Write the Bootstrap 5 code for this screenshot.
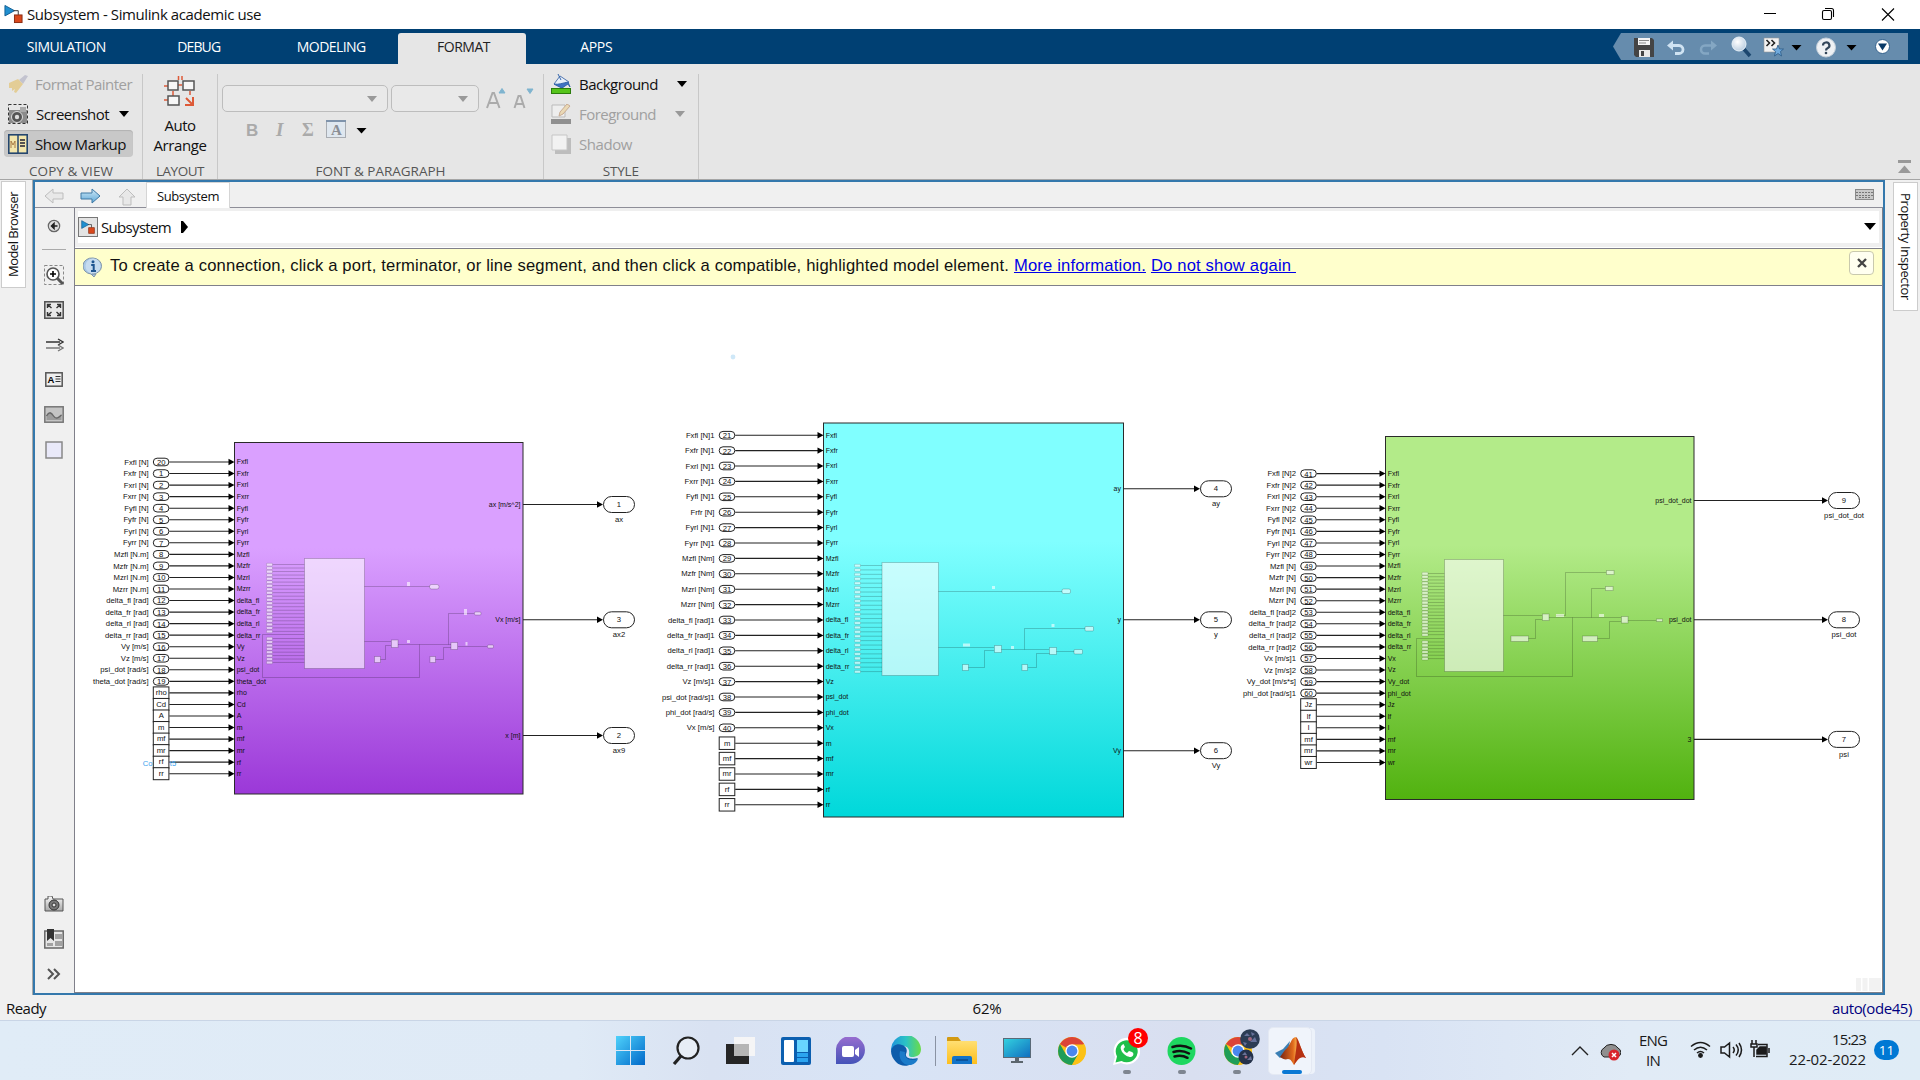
<!DOCTYPE html>
<html lang="en">
<head>
<meta charset="utf-8">
<title>Subsystem - Simulink academic use</title>
<link href="https://cdn.jsdelivr.net/npm/bootstrap@5.3.0/dist/css/bootstrap.min.css" rel="stylesheet">
<style>
html,body{height:100%;overflow:hidden}
body{width:1920px;height:1080px;font-family:"Open Sans","Noto Sans",sans-serif;font-size:15px;line-height:20px;color:#111;background:#f0f0f0}
svg{display:block;flex:none}
[data-w],[data-h]{display:inline-block;white-space:nowrap}
.titlebar{height:29px;background:#fff;padding:0 10px 1px 4px}
.tabstrip{height:35px;background:#004073;color:#fff;font-size:14px}
.rtab{width:132.5px;height:31px;line-height:28px;text-align:center}
.rtab.on{width:128px;margin:0 4px 0 .5px;padding-left:3px;background:#e6e6e6;color:#222;border-radius:3px 3px 0 0}
.quick{width:295px;height:27px;background:#668cad;clip-path:polygon(8px 0,100% 0,100% 100%,8px 100%,0 50%);margin:4px 12px 0 0}
.ribbon{height:116px;background:#e6e6e6;border-bottom:1px solid #a5a5a5;font-size:15px}
.rgroup{margin-top:10px;height:105px;border-right:1px solid #c8c8c8}
.ritems{height:89px;margin-top:-4px}
.rcap{color:#555;font-size:13.5px;line-height:16px;height:16px;text-align:center}
.dim{color:#a0a0a0}
.ritem{height:27px;padding-left:4px;border-radius:4px}
.ritem.on{background:#c8c8c8;box-shadow:inset 0 1px 1px #b2b2b2}
.combo{height:27px;border:1px solid #bdbdbd;border-radius:5px;background:#e9e9e9}
.tri{width:0;height:0;border:5px solid transparent;border-top:6px solid #000;border-bottom:0;flex:none}
.tri.g{border-top-color:#999}
.work{height:815px}
.side{width:33px;border-right:1px solid #a9a9a9}
.sidetab{background:#fff;border:1px solid #ccc;font-size:13px;writing-mode:vertical-rl;line-height:23px;text-align:center}
.frame{width:1852px;border:2px solid #3478ac}
.docbar{height:26px;border-bottom:1px solid #8e8e98}
.doctab{width:84px;height:26px;background:#fff;border:1px solid #d5d5d5;border-bottom:0;font-size:13px;line-height:26px;text-align:center;margin-left:2px}
.palette{width:39px;padding:0 1px 2px 0}
.palette>div{height:35px}
.stage{width:1809px;border-left:1px solid #80808a;border-right:1px solid #80808a;border-bottom:1px solid #80808a;background:#fff}
.crumb{height:39px;border:3px solid #efefef;border-bottom-width:4px;background:#fff}
.note{height:38px;margin:1px 0;background:#ffffcc;border-top:1px solid #80808a;border-bottom:1px solid #80808a;font-family:"Liberation Sans",Arial,sans-serif;font-size:16.6px}
.note a{color:#0000e8;text-decoration:underline}
.xbtn{width:25px;height:24px;border:1px solid #c9c9ad;border-radius:4px;background:#fffff0;margin:2px 8px 0 0}
.status{height:25px;background:#f0f0f0}
.taskbar{height:60px;background:linear-gradient(90deg,#e0ecf7 0,#dfeaf6 30%,#d9e2f2 37%,#d8e4f6 46%,#d9dff0 62%,#d9e3f4 72%,#e1ebf6 85%,#dfecf6 100%);border-top:1px solid #c9d5e6;color:#1a1a1a}
.slot{width:55px;height:59px;position:relative}
.run::after{content:"";position:absolute;left:24px;top:49px;width:8px;height:4px;border-radius:2px;background:#7e8590}
.wabadge{position:absolute;left:29px;top:7px;width:20px;height:20px;border-radius:50%;background:#f00;color:#fff;font-size:16px;line-height:20px;text-align:center}
.tile{width:44px;height:48px;background:#f0f4fb;border-radius:5px;border:1px solid #e4e9f3;box-shadow:4px 0 0 -1px #edf2fa;margin-left:4px;position:relative}
.tile::after{content:"";position:absolute;left:13px;bottom:0;width:20px;height:4px;border-radius:2px;background:#0a78d4}
.cnt{width:25px;height:20px;border-radius:10px;background:#0078d4;color:#fff;font-size:13.5px;line-height:20px;text-align:center}
#diagram text{font-family:"Liberation Sans",Arial,sans-serif}
</style>
<script src="https://cdn.jsdelivr.net/npm/bootstrap@5.3.0/dist/js/bootstrap.bundle.min.js"></script>
</head>
<body class="d-flex flex-column">
<svg width="0" height="0" style="position:absolute">
 <defs>
  <linearGradient id="gBlue" x1="0" y1="0" x2="0" y2="1"><stop offset="0" stop-color="#cfe9f8"/><stop offset="1" stop-color="#5ea7d6"/></linearGradient>
  <linearGradient id="gGrey" x1="0" y1="0" x2="0" y2="1"><stop offset="0" stop-color="#fafafa"/><stop offset="1" stop-color="#a8a8a8"/></linearGradient>
  <linearGradient id="gWin" x1="0" y1="0" x2="1" y2="1"><stop offset="0" stop-color="#4fd2fb"/><stop offset="1" stop-color="#0068c9"/></linearGradient>
  <linearGradient id="gChat" x1="0" y1="0" x2="0" y2="1"><stop offset="0" stop-color="#9a6ed0"/><stop offset="1" stop-color="#4453b8"/></linearGradient>
  <linearGradient id="gEdge" x1="0" y1="0" x2="1" y2="0"><stop offset="0" stop-color="#1e93dc"/><stop offset=".5" stop-color="#2bc3c5"/><stop offset="1" stop-color="#6bdc48"/></linearGradient>
  <linearGradient id="gFold" x1="0" y1="0" x2="0" y2="1"><stop offset="0" stop-color="#ffdf73"/><stop offset="1" stop-color="#fdbe1c"/></linearGradient>
  <linearGradient id="gMon" x1="0" y1="0" x2="1" y2="1"><stop offset="0" stop-color="#34d3e0"/><stop offset="1" stop-color="#0f6cbf"/></linearGradient>
  <linearGradient id="gMat" x1="0" y1="0" x2="1" y2="0"><stop offset="0" stop-color="#7a2410"/><stop offset=".5" stop-color="#e06a1c"/><stop offset=".65" stop-color="#f9b04c"/><stop offset="1" stop-color="#a2220c"/></linearGradient>
  <radialGradient id="gLens" cx=".4" cy=".35" r=".7"><stop offset="0" stop-color="#fff"/><stop offset="1" stop-color="#b9cde0"/></radialGradient>
  <symbol id="sl" viewBox="0 0 20 20"><path d="M1 1v11l10-5.5z" fill="#1f8fd0" stroke="#145f92"/><path d="M10 6.5h5V11" fill="none" stroke="#333"/><rect x="11" y="11" width="8" height="8" fill="#d9481c" stroke="#8a2b10"/></symbol>
  <symbol id="chrome" viewBox="0 0 28 28"><circle cx="14" cy="14" r="14" fill="#fbc116"/><path d="M14 14L1.9 7A14 14 0 0 1 26.1 7z" fill="#dc4437"/><path d="M1.9 7A14 14 0 0 0 14 28l6-10.5H8z" fill="#1f9d57"/><path d="M14 28A14 14 0 0 0 26.1 7.5H14l6.2 10z" fill="#fbc116"/><circle cx="14" cy="14" r="6.7" fill="#fff"/><circle cx="14" cy="14" r="5.4" fill="#4a87ee"/></symbol>
 </defs>
</svg>

<header class="titlebar d-flex align-items-center">
 <svg width="19" height="20" class="me-1"><use href="#sl" width="19" height="20"/></svg>
 <span data-w="234">Subsystem - Simulink academic use</span>
 <svg class="ms-auto" width="150" height="28" fill="none" stroke="#000" stroke-width="1.1"><path d="M4 13.5h12M122 8.500l12 12M134 8.500l-12 12"/><rect x="62.500" y="10.500" width="9" height="9" rx="1.500"/><path d="M65 8.500h6.500a2 2 0 0 1 2 2V17"/></svg>
</header>

<nav class="tabstrip d-flex">
 <div class="d-flex align-items-end">
  <div class="rtab"><span data-w="79">SIMULATION</span></div><div class="rtab"><span data-w="43">DEBUG</span></div><div class="rtab"><span data-w="69">MODELING</span></div><div class="rtab on"><span data-w="53">FORMAT</span></div><div class="rtab"><span data-w="32">APPS</span></div>
 </div>
 <div class="quick ms-auto">
  <svg width="295" height="27">
   <path d="M21 5h18l2 2v17H23l-2-2z" fill="#444"/><path d="M25 5h12v7H25z" fill="#f4f4f4"/><path d="M26 7.500h10M26 10h7" stroke="#888"/><path d="M26 17h11v7H26z" fill="#e8e8e8"/><path d="M28 18h3v5h-3z" fill="#444"/>
   <path d="M56 12.500h10a4 4 0 0 1 0 8h-4" fill="none" stroke="#cfe3f2" stroke-width="2.800"/><path d="M54 12.500l6-5v10z" fill="#cfe3f2"/>
   <path d="M102 12.500H92a4 4 0 0 0 0 8h4" fill="none" stroke="#84a7c3" stroke-width="2.500"/><path d="M104 12.500l-6-5v10z" fill="#84a7c3"/>
   <path d="M130 15l7 8" stroke="#1c466e" stroke-width="3.500"/><circle cx="126" cy="11" r="7" fill="url(#gLens)" stroke="#e8f1f8"/>
   <path d="M151 5h15v14h-15z" fill="#f2f2f2" stroke="#999" stroke-width=".6"/><path d="M153.500 7l3 3-3 3M158.500 7l3 3-3 3" fill="none" stroke="#222" stroke-width="1.600"/><path d="M165 12l1.500 4h4l-3 2.500 1 4.500-3.500-2.500-3.500 2.500 1-4.500-3-2.500h4z" fill="#6fa9dc" stroke="#2c5a86" stroke-width=".8"/>
   <path d="M178.500 12h10l-5 5.500zM233.500 12h10l-5 5.500z" fill="#000"/>
   <circle cx="213" cy="14.500" r="9.500" fill="#eef1f4" stroke="#c5d0da"/><path d="M210 12.500a3.200 3 0 1 1 4.500 2.700c-1 .5-1.500 1-1.500 2.200" fill="none" stroke="#33465a" stroke-width="2.200"/><circle cx="213" cy="20" r="1.300" fill="#33465a"/>
   <circle cx="269.500" cy="13.500" r="7" fill="#fff" stroke="#33618c"/><path d="M265 10.500h9l-4.500 7z" fill="#0a3a68"/>
  </svg>
 </div>
</nav>

<section class="ribbon d-flex">
 <div class="rgroup d-flex flex-column" style="width:143px">
  <div class="ritems ps-1" style="padding-right:9px">
   <div class="ritem d-flex align-items-center dim"><svg width="20" height="20" class="me-2"><path d="M11 6l6-5 3 1-5 8z" fill="#c3c3cf"/><path d="M1 9l9-4 5 5-7 9-2-1 1-3-3 2 0-3-3 0z" fill="#e3cd96"/></svg><span data-w="97" style="margin-left:-1px">Format Painter</span></div>
   <div class="ritem d-flex align-items-center" style="margin-top:3px"><svg width="20" height="20" class="me-2"><rect x=".5" y=".5" width="19" height="19" fill="none" stroke="#333" stroke-dasharray="3 2"/><rect x="1" y="6" width="18" height="13" fill="#8b8b8b"/><rect x="12" y="3" width="6" height="5" fill="#aaa"/><circle cx="9" cy="13" r="5.500" fill="#555" stroke="#ddd"/><circle cx="9" cy="13" r="2.200" fill="#ddd"/></svg><span data-w="73">Screenshot</span><i class="tri ms-auto me-1"></i></div>
   <div class="ritem on d-flex align-items-center" style="margin-top:3px"><svg width="20" height="20" class="me-2"><rect x=".8" y=".8" width="18.400" height="18.400" fill="#f3e6ac" stroke="#24466f" stroke-width="1.600"/><path d="M10 0v20" stroke="#24466f" stroke-width="1.500"/><path d="M3 14V7l2 4 2-4v7" fill="none" stroke="#a87b46"/><path d="M12 6h5M12 9h5M12 12h5" stroke="#223" stroke-width="1.400"/></svg><span data-w="91" style="margin-left:-1px">Show Markup</span></div>
  </div>
  <div class="rcap mt-auto"><span data-w="84">COPY &amp; VIEW</span></div>
 </div>
 <div class="rgroup d-flex flex-column align-items-center" style="width:75px">
  <svg width="32" height="32" style="margin-top:2px" fill="#f7f7f7" stroke="#555" stroke-width="1.500"><path d="M14.500 4V0M18 4V0M14 9h4M9 15v6M0 24h4M26 15v4M0 10h4" stroke="#dd5a38"/><rect x="4" y="5" width="10" height="9"/><rect x="19" y="5" width="11" height="9"/><rect x="4" y="20" width="11" height="9"/><path d="M22 22l7 7M29 21v8h-8" stroke="#dd5a38" stroke-width="2" fill="none"/></svg>
  <div class="text-center" style="margin-top:7px;line-height:20px"><span data-w="31">Auto</span><br><span data-w="53">Arrange</span></div>
  <div class="rcap mt-auto"><span data-w="48">LAYOUT</span></div>
 </div>
 <div class="rgroup d-flex flex-column" style="width:326px">
  <div class="d-flex align-items-start" style="padding:11px 0 0 4px">
   <div class="combo d-flex align-items-center justify-content-end" style="width:166px;padding-right:10px"><i class="tri g"></i></div>
   <div class="combo d-flex align-items-center justify-content-end" style="width:88px;margin-left:3px;padding-right:10px"><i class="tri g"></i></div>
   <svg width="56" height="27" class="ms-1" fill="none" stroke="#ababab" stroke-width="2"><path d="M4 23l5.500-15h1.500l5.500 15M6.500 18h8M31.500 23l4-12h2l4 12M33 19h7"/><path d="M16 8h6l-3-4.500zM44 4h6l-3 4.500z" fill="#7fb4cf" stroke="#7fb4cf" stroke-width="1"/></svg>
  </div>
  <svg width="140" height="24" style="margin:6px 0 0 24px"><g font-family="Liberation Serif,serif" font-size="19" fill="#aaa" font-weight="bold"><text x="4" y="18" font-family="Liberation Sans,sans-serif" font-size="17">B</text><text x="34" y="18" font-style="italic">I</text><text x="60" y="18" font-size="18">Σ</text></g><rect x="84.500" y="2.500" width="19" height="17" fill="#dfe7ef" stroke="#a8acb2"/><path d="M84 3h20" stroke="#7f93ab" stroke-width="2"/><text x="89" y="17" font-family="Liberation Serif,serif" font-size="15" font-weight="bold" fill="#8b8f96">A</text><path d="M114.500 10h10l-5 5.500z"/></svg>
  <div class="rcap mt-auto"><span data-w="130">FONT &amp; PARAGRAPH</span></div>
 </div>
 <div class="rgroup d-flex flex-column" style="width:154.500px">
  <div class="ritems" style="padding-left:3px">
   <div class="ritem d-flex align-items-center"><svg width="20" height="21" class="me-2"><path d="M3 11l6-8 9 6-7 6z" fill="#e8f0fa" stroke="#5377b0"/><path d="M7 1l3 6M3 11c4 1 9-1 14-2l2 5-2-3-6 4z" fill="#3e73c4" stroke="#3566ac"/><rect x=".5" y="15.500" width="19" height="5" fill="#55c41a" stroke="#2b7c0c"/></svg><span data-w="79">Background</span><i class="tri" style="margin-left:19px"></i></div>
   <div class="ritem d-flex align-items-center dim" style="margin-top:3px"><svg width="20" height="20" class="me-2"><path d="M1 1h13v12H1z" fill="#eee" stroke="#bbb"/><path d="M8 12l1-4 7-8 3 2-7 8z" fill="#ead9b5" stroke="#c8ab93"/><rect y="15" width="20" height="5" fill="#909090"/></svg><span data-w="77">Foreground</span><i class="tri g" style="margin-left:19px"></i></div>
   <div class="ritem d-flex align-items-center dim" style="margin-top:3px"><svg width="20" height="20" class="me-2"><path d="M4 4h16v16H4z" fill="#bdbdbd"/><path d="M1 1h15v15H1z" fill="#f2f2f2" stroke="#c6c6c6"/></svg><span data-w="53">Shadow</span></div>
  </div>
  <div class="rcap mt-auto"><span data-w="36">STYLE</span></div>
 </div>
 <svg class="ms-auto align-self-end mb-1" width="22" height="15"><path d="M0 1.500h13" stroke="#999" stroke-width="3"/><path d="M0 13h13L6.500 5.500z" fill="#999"/></svg>
</section>

<main class="work d-flex">
 <aside class="side"><div class="sidetab" style="width:25px;height:107px;margin:1px 0 0 1px"><span data-h="85" style="transform:rotate(180deg)">Model Browser</span></div></aside>
 <section class="frame d-flex flex-column">
  <div class="docbar d-flex align-items-center">
   <svg width="100" height="24" style="margin-left:9px"><g fill="#e8e8e8" stroke="#bdbdbd"><path d="M1 13l8-7v4h10v6H9v4z"/><path d="M83 6l8 8h-4v8h-8v-8h-4z" /></g><path d="M56 13l-8-7v4H37v6h11v4z" fill="url(#gBlue)" stroke="#3e78a4"/></svg>
   <div class="doctab"><span data-w="62">Subsystem</span></div>
   <svg class="ms-auto" width="20" height="12" style="margin-right:8px"><rect x=".5" y=".5" width="18" height="10" fill="#c9c9c9" stroke="#8a8a8a"/><path d="M1 3.500h17M1 6.500h17M4 8.500h11" stroke="#777" stroke-dasharray="2 1"/></svg>
  </div>
  <div class="d-flex flex-grow-1">
   <div class="palette d-flex flex-column align-items-center">
    <div class="d-flex align-items-center"><svg width="16" height="16"><circle cx="8" cy="8" r="5.700" fill="#ddd" stroke="#666" stroke-width="1.200"/><path d="M11.500 8H6M8 5.500L5.500 8 8 10.500z" fill="#222" stroke="#222" stroke-width="1.500"/></svg></div>
    <span style="width:24px;height:1px;background:#aaa;margin:6px 0 7px"></span>
    <div class="d-flex align-items-center"><svg width="20" height="20"><rect x=".5" y=".5" width="19" height="19" fill="none" stroke="#888" stroke-dasharray="3 2"/><circle cx="9" cy="9" r="6" fill="#fff" stroke="#555" stroke-width="1.600"/><path d="M6 9h6M9 6v6" stroke="#000" stroke-width="1.600"/><path d="M13 13l6 6" stroke="#555" stroke-width="3"/></svg></div>
    <div class="d-flex align-items-center"><svg width="20" height="18"><rect x=".8" y=".8" width="18.400" height="16.400" fill="#e8e8e8" stroke="#555" stroke-width="1.600"/><path d="M3.500 7V3.500H7M3.500 3.500l4 3.500M16.500 7V3.500H13M16.500 3.500l-4 3.500M3.500 11v3.500H7M3.500 14.500l4-3.500M16.500 11v3.500H13M16.500 14.500l-4-3.500" fill="none" stroke="#333" stroke-width="1.400"/></svg></div>
    <div class="d-flex align-items-center"><svg width="19" height="14" fill="none" stroke="#333" stroke-width="1.400"><path d="M1 4h14M13 1l5 3-5 3"/><path d="M1 10h14M13 7l5 3-5 3" stroke="#777"/></svg></div>
    <div class="d-flex align-items-center"><svg width="18" height="15"><rect x=".8" y=".8" width="16.400" height="13.400" fill="#eee" stroke="#555" stroke-width="1.500"/><text x="2.500" y="11" font-size="9.500" font-weight="bold" font-family="Liberation Sans,sans-serif">A</text><path d="M10.500 4.500h5M10.500 7h5M10.500 9.500h5" stroke="#333"/></svg></div>
    <div class="d-flex align-items-center"><svg width="20" height="17"><rect x=".8" y=".8" width="18.400" height="15.400" fill="#c4c4c4" stroke="#777" stroke-width="1.500"/><path d="M2.500 14V9c3-5 5-3 7 0s4 3 8-1v6z" fill="#9b9b9b"/><path d="M2.500 10c3-5 5-3 7 0s4 3 8-1" fill="none" stroke="#666" stroke-width="1.300"/></svg></div>
    <div class="d-flex align-items-center"><svg width="18" height="18"><rect x="1" y="1" width="16" height="16" fill="#e9e9f9" stroke="#888" stroke-width="1.500"/></svg></div>
    <div class="mt-auto d-flex align-items-center"><svg width="20" height="16"><path d="M1 3h3V0h4l1 3h10v12H1z" fill="url(#gGrey)" stroke="#555"/><circle cx="10" cy="9" r="5" fill="#777" stroke="#333"/><circle cx="10" cy="9" r="2" fill="#ddd" stroke="#333"/></svg></div>
    <div class="d-flex align-items-center"><svg width="20" height="20"><rect x=".8" y="2" width="18.400" height="17" fill="#e6e6e6" stroke="#666" stroke-width="1.500"/><path d="M11 5h7v5h-7zM11 12h7v5h-7zM3 14h6v3H3z" fill="#a2a2a2"/><path d="M3 0h7v12l-3.500-3L3 12z" fill="#333"/></svg></div>
    <div class="d-flex align-items-center"><svg width="16" height="12" fill="none" stroke="#555" stroke-width="2"><path d="M2 1l5 5-5 5M8 1l5 5-5 5"/></svg></div>
   </div>
   <div class="stage d-flex flex-column">
    <div class="crumb d-flex align-items-center">
     <svg width="20" height="20" style="margin-right:3px"><rect x=".5" y=".5" width="19" height="19" fill="#e3e3e3" stroke="#777"/><use href="#sl" x="3" y="3" width="14" height="14"/></svg>
     <span data-w="70">Subsystem</span>
     <svg width="8" height="12" style="margin-left:10px"><path d="M0 0h2l5 6-5 6H0z"/></svg>
     <svg class="ms-auto" width="12" height="8" style="margin:-3px 3px 0 0"><path d="M0 1h12L6 8z"/></svg>
    </div>
    <div class="note d-flex align-items-start">
     <svg width="20" height="20" style="margin:8px 7px 0 8px"><path d="M10 1a8.800 7.800 0 1 1-1 16h4l-2 3-3-3a8.800 7.800 0 0 1 2-16z" fill="#a9c8e6" stroke="#7f94a8"/><circle cx="10" cy="9" r="7.500" fill="#c6dbef"/><path d="M8.200 8h2.500v6M8 14h5" fill="none" stroke="#1e5590" stroke-width="2"/><circle cx="10" cy="4.700" r="1.500" fill="#1e5590"/></svg>
     <div style="padding-top:7px"><span data-w="899">To create a connection, click a port, terminator, or line segment, and then click a compatible, highlighted model element.</span><a href="#" data-w="132" style="margin-left:5px">More information.</a><a href="#" data-w="145" style="margin-left:5px">Do not show again&nbsp;</a></div>
     <div class="xbtn ms-auto d-flex align-items-center justify-content-center"><svg width="10" height="10" stroke="#444" stroke-width="2.300"><path d="M1 1l8 8M9 1L1 9"/></svg></div>
    </div>
    <svg id="diagram" width="1807" height="705" viewBox="75 287 1807 705"></svg>
   </div>
  </div>
 </section>
 <aside class="ps-2"><div class="sidetab" style="width:25px;height:129px;margin-top:2px"><span data-h="107">Property Inspector</span></div></aside>
</main>

<div class="status d-flex align-items-center justify-content-between">
 <span style="padding-left:6px;width:300px"><span data-w="40">Ready</span></span><span data-w="29" style="margin-left:54px">62%</span><span style="width:300px;padding-right:8px;color:#000080" class="text-end"><span data-w="80">auto(ode45)</span></span>
</div>

<footer class="taskbar d-flex align-items-center">
 <div class="d-flex" style="margin-left:603px">
  <div class="slot d-flex align-items-center justify-content-center"><svg width="29" height="29"><path d="M0 0h14v14H0zM15 0h14v14H15zM0 15h14v14H0zM15 15h14v14H15z" fill="url(#gWin)"/></svg></div>
  <div class="slot d-flex align-items-center justify-content-center"><svg width="28" height="29" fill="none" stroke="#222"><circle cx="16" cy="12" r="10.500" stroke-width="2.200" fill="#e7edf5"/><path d="M9 20l-7 8" stroke-width="3.200"/></svg></div>
  <div class="slot d-flex align-items-center justify-content-center"><svg width="30" height="29"><path d="M0 8h23v20H0z" fill="#262626"/><path d="M8 1h21v19H8z" fill="#f6f6f6" opacity=".96"/><path d="M8 8h15v12H8z" fill="#b5b5b5"/></svg></div>
  <div class="slot d-flex align-items-center justify-content-center"><svg width="30" height="28"><rect width="30" height="28" rx="2" fill="#0b5fb0"/><rect x="3" y="3" width="10" height="22" rx="1" fill="#fff"/><rect x="16" y="3" width="11" height="12" fill="#68d5ff"/><rect x="16" y="16" width="11" height="4" fill="#2ba5f0"/><rect x="16" y="21" width="11" height="4" fill="#2ba5f0"/></svg></div>
  <div class="slot d-flex align-items-center justify-content-center"><svg width="29" height="28"><path d="M0 27V14A14.500 14 0 1 1 14 27z" fill="url(#gChat)"/><rect x="6" y="9" width="12" height="11" rx="2" fill="#fff"/><path d="M19 13l4-3v10l-4-3z" fill="#fff"/></svg></div>
  <div class="slot d-flex align-items-center justify-content-center"><svg width="30" height="30"><path d="M0 15A15 15 0 0 1 30 13c0 6-4 8-9 8-3 0-3-1-3-3 1-5-2-8-6-8-7 0-12 4-12 5z" fill="url(#gEdge)"/><path d="M0 15c1-5 6-8 11-6 4 1 6 5 4 9-1 4 5 6 12 4-6 9-16 10-22 4-3-3-5-7-5-11z" fill="#0d5cab"/><path d="M9 15c-2 8 3 15 11 14 4-1 6-4 7-6-9 3-14-1-13-7z" fill="#1b7bc9"/></svg></div>
  <div style="width:1px;height:30px;background:#8a93a3;align-self:center;margin-left:2px;margin-right:-2px"></div>
  <div class="slot d-flex align-items-center justify-content-center"><svg width="30" height="27"><path d="M0 4V1q0-1 1-1h10l3 4z" fill="#d39a12"/><path d="M0 4h29q1 0 1 1v22H0z" fill="url(#gFold)"/><path d="M5 27v-6q0-2 2-2h16q2 0 2 2v6z" fill="#1273c8"/><path d="M9 23h12" stroke="#0a4a8c" stroke-width="1.500"/></svg></div>
  <div class="slot d-flex align-items-center justify-content-center"><svg width="28" height="25"><rect x=".5" y=".5" width="27" height="19" fill="url(#gMon)" stroke="#5a6a78"/><path d="M12 20h4v3h4v2H8v-2h4z" fill="#5c666e"/></svg></div>
  <div class="slot d-flex align-items-center justify-content-center"><svg width="28" height="28"><use href="#chrome" width="28" height="28"/></svg></div>
  <div class="slot run d-flex align-items-center justify-content-center"><svg width="27" height="28"><path d="M0 28l2-8A13.300 13.300 0 1 1 8 26z" fill="#fff"/><path d="M2.500 25.500l1.500-6A11 11 0 1 1 8.500 24z" fill="#20bf4b"/><path d="M9 8c-4 3 2 12 9 12 3-1 3-4 1-5l-3-1-2 2c-2-1-3-2-3.500-4L12 10l-1.500-3z" fill="#fff"/></svg><div class="wabadge">8</div></div>
  <div class="slot run d-flex align-items-center justify-content-center"><svg width="29" height="28"><circle cx="14.500" cy="14" r="14" fill="#1ed760"/><path d="M5.500 10c6-2 13-1.500 18.500 1.500M6.500 15c5-1.500 11-1 15.500 1.500M7.500 19.500c4-1.200 9-1 13 1.300" fill="none" stroke="#111" stroke-width="2.500" stroke-linecap="round"/></svg></div>
  <div class="slot run d-flex align-items-center justify-content-center"><svg width="38" height="36" style="margin:-8px 0 0 10px"><use href="#chrome" x="1" y="8" width="28" height="28"/><circle cx="27" cy="10" r="9.800" fill="#2c3c55"/><path d="M21 7l3-3 3 3zM27 13l5-5 2 5zM20 13l4 1-2 3zM28 3l4 2-3 2z" fill="#66719a"/><circle cx="27" cy="10" r="2" fill="#a3677e"/><circle cx="23" cy="28" r="7.500" fill="#25324a"/><path d="M19 26l3-3 2 3zM24 31l4-4 1 4z" fill="#6a7298"/><circle cx="23" cy="28" r="1.500" fill="#a3677e"/></svg></div>
  <div class="tile align-self-center d-flex align-items-center justify-content-center"><svg width="31" height="28"><path d="M0 16l8-4 7-8-2 9-8 8z" fill="#3b7fb4"/><path d="M5 20l5-7c5-3 6-13 11-13 3 2 5 14 10 21-5-3-7 0-12 7-2-3-3-6-6-6-3 1-5 0-8-2z" fill="url(#gMat)"/><path d="M21 0c2 6-1 18-2 28 2-3 4-6 6-7 2-1 4-1 6 0-5-7-7-19-10-21z" fill="#b63012"/></svg></div>
 </div>
 <svg class="ms-auto" width="50" height="30"><path d="M1 19l8-8 8 8" fill="none" stroke="#222" stroke-width="1.400"/><path d="M33 21a5 5 0 0 1 0-9 8 7 0 0 1 14 0 5 5 0 0 1 0 9z" fill="#8f8f8f" stroke="#222"/><circle cx="43" cy="19" r="5.500" fill="#d9252c"/><path d="M41 17l4 4M45 17l-4 4" stroke="#fff" stroke-width="1.500"/></svg>
 <div class="text-center" style="width:30px;margin:-2px 22px 0 17px;line-height:20px"><span data-w="28">ENG</span><br><span data-w="14">IN</span></div>
 <svg width="82" height="22" style="margin-top:-2px" fill="none" stroke="#1b1b1b" stroke-width="1.500"><path d="M1 7.500q9.500-8 19 0M4 11q6.500-5.500 13 0M7 14q3.500-3 7 0"/><circle cx="10.500" cy="16.500" r="1.700" fill="#1b1b1b"/><path d="M31 8h3.500l5-4v14l-5-4H31zM43 8q2.500 3 0 6M46 5.500q4.500 5.500 0 11M49 4q5 7 0 14"/><path d="M68 5.500h9v12H66M79 9v5" /><path d="M70 8h6v7h-9v-4z" fill="#1b1b1b"/><path d="M62 1v4M66 1v4M61 5h6v3h-6zM64 8v10"/></svg>
 <div class="text-end" style="width:80px;margin:-3px 8px 0 14px;line-height:20px"><span data-w="34">15:23</span><br><span data-w="77">22-02-2022</span></div>
 <div class="cnt" style="margin:-1px 21px 0 0">11</div>
</footer>

<script>
/* Fit labels to their slot by adjusting tracking */
document.querySelectorAll('[data-w],[data-h]').forEach(function(e){
  var v=e.hasAttribute('data-h'), r=e.getBoundingClientRect();
  var have=v?r.height:r.width, want=+(v?e.dataset.h:e.dataset.w);
  e.style.letterSpacing=((want-have)/e.textContent.length).toFixed(3)+'px';
});
/* Block diagram */
var out=[];
function T(x,y,s,a,c,f){f=f||7.7;out.push('<text x="'+x+'" y="'+(y+f*.34).toFixed(2)+'" font-size="'+f+'" text-anchor="'+(a||'start')+'" fill="'+(c||'#111')+'">'+s+'</text>')}
function R(x,y,w,h,f,s,r){out.push('<rect x="'+x+'" y="'+y+'" width="'+w+'" height="'+h+'" rx="'+(r||0)+'" fill="'+f+'" stroke="'+s+'"/>')}
function wire(x1,x2,y){out.push('<path d="M'+x1+' '+y+'H'+(x2-4)+'" stroke="#222" stroke-width="1.1"/><path d="M'+(x2-6)+' '+(y-3.2)+'l6 3.200-6 3.200z"/>')}
function block(b){
  out.push('<linearGradient id="'+b.id+'" x1="0" y1="0" x2="0" y2="1"><stop offset=".3" stop-color="'+b.c[0]+'"/><stop offset="1" stop-color="'+b.c[1]+'"/></linearGradient>');
  R(b.x,b.y,b.w,b.h,'url(#'+b.id+')','#2a2a2a');
  b.rows.forEach(function(r,i){
    var y=+(b.y0+i*b.dy).toFixed(2), p=r.split('|');
    wire(b.px+16,b.x,y);
    if(p[0]){T(b.px-4.7,y,p[0],'end');R(b.px,y-3.8,15.6,7.6,'#fff','#222',3.8);T(b.px+7.9,y+.3,p[1],'middle')}
    else{R(b.px,y-b.bh/2,15.6,b.bh,'#fff','#222');T(b.px+7.9,y-.3,p[1],'middle')}
    T(b.x+2.200,y,p[2],'start','#111',7);
  });
  /* block name that shows on both sides of the constant */
  if(b.ghost){T(b.px-.7,763.3,b.ghost[0],'end','#3aa2ee');T(b.px+16.5,763.3,b.ghost[1],'start','#3aa2ee')}
  b.outs.forEach(function(o){
    T(b.x+b.w-2.500,o[0],o[1],'end','#111',7);wire(b.x+b.w,b.ox,o[0]);
    R(b.ox+.5,o[0]-8,31,16,'#fff','#222',8);T(b.ox+16,o[0],o[2],'middle');T(b.ox+16,o[0]+14.6,o[3],'middle');
  });
  /* content preview */
  var g='<g fill="#fff" fill-opacity=".6" stroke="#000" stroke-opacity=".22" stroke-width=".9">';
  b.src.forEach(function(s){for(var i=0;i<s[1];i++){var y=(s[0]+i*s[2]).toFixed(2);g+='<path d="M'+(b.sx+6)+' '+y+'H'+b.big[0]+'"/><rect x="'+b.sx+'" y="'+(y-1.2)+'" width="6" height="2.600" rx=".6" stroke-opacity=".15"/>'}});
  g+='<path fill="none" d="'+b.lines+'"/>';
  [b.big].concat(b.bits).forEach(function(q){g+='<rect x="'+q[0]+'" y="'+q[1]+'" width="'+q[2]+'" height="'+q[3]+'" rx="'+(q[4]||0)+'"/>'});
  g+='</g><g fill="#fff" fill-opacity=".6">';
  b.tags.forEach(function(q){g+='<rect x="'+q[0]+'" y="'+q[1]+'" width="'+q[2]+'" height="'+q[3]+'"/>'});
  out.push(g+'</g>');
}
block({id:'pv',c:['#daa0ff','#9b38d8'],x:234.5,y:442.5,w:288.5,h:351.500,px:153.300,y0:462,dy:11.545,bh:12,ghost:['Co','t5'],
 rows:['Fxfl [N]|20|Fxfl','Fxfr [N]|1|Fxfr','Fxrl [N]|2|Fxrl','Fxrr [N]|3|Fxrr','Fyfl [N]|4|Fyfl','Fyfr [N]|5|Fyfr','Fyrl [N]|6|Fyrl','Fyrr [N]|7|Fyrr','Mzfl [N.m]|8|Mzfl','Mzfr [N.m]|9|Mzfr','Mzrl [N.m]|10|Mzrl','Mzrr [N.m]|11|Mzrr','delta_fl [rad]|12|delta_fl','delta_fr [rad]|13|delta_fr','delta_rl [rad]|14|delta_rl','delta_rr [rad]|15|delta_rr','Vy [m/s]|16|Vy','Vz [m/s]|17|Vz','psi_dot [rad/s]|18|psi_dot','theta_dot [rad/s]|19|theta_dot','|rho|rho','|Cd|Cd','|A|A','|m|m','|mf|mf','|mr|mr','|rf|rf','|rr|rr'],
 outs:[[504.5,'ax [m/s^2]','1','ax'],[619.8,'Vx [m/s]','3','ax2'],[735.5,'x [m]','2','ax9']],ox:603,
 src:[[564.5,20,3.52],[638.500,8,3.42]],sx:266.5,big:[304.500,558.500,60,110],
 lines:'M364 586.500H430M364 641.500H391M380 659.500H385.500V645.500H391M398 644.500H451M419.500 644.500V677.500H262.500V634.500H304M448.500 644.500V613.500H474M435 659.500H443.500V647.500H451M458 646.500H487',
 bits:[[429.500,584.500,9.500,4.500,2],[391.500,640,6.500,7.500],[374.500,656.500,6,6],[474.500,612,6.500,3,1],[451,642.500,6.500,7],[430,656.500,5.500,6],[487.500,645,6,3,1]],
 tags:[[407,582,3,4],[407,640,3,3],[464,609,3,6],[465.500,642,2,3.500]]});
block({id:'cy',c:['#80ffff','#00d8da'],x:823.5,y:423,w:300,h:394,px:719.200,y0:435.2,dy:15.4,bh:12.5,
 rows:['Fxfl [N]1|21|Fxfl','Fxfr [N]1|22|Fxfr','Fxrl [N]1|23|Fxrl','Fxrr [N]1|24|Fxrr','Fyfl [N]1|25|Fyfl','Frfr [N]|26|Fyfr','Fyrl [N]1|27|Fyrl','Fyrr [N]1|28|Fyrr','Mzfl [Nm]|29|Mzfl','Mzfr [Nm]|30|Mzfr','Mzrl [Nm]|31|Mzrl','Mzrr [Nm]|32|Mzrr','delta_fl [rad]1|33|delta_fl','delta_fr [rad]1|34|delta_fr','delta_rl [rad]1|35|delta_rl','delta_rr [rad]1|36|delta_rr','Vz [m/s]1|37|Vz','psi_dot [rad/s]1|38|psi_dot','phi_dot [rad/s]|39|phi_dot','Vx [m/s]|40|Vx','|m|m','|mf|mf','|mr|mr','|rf|rf','|rr|rr'],
 outs:[[488.8,'ay','4','ay'],[619.8,'y','5','y'],[750.7,'Vy','6','Vy']],ox:1200,
 src:[[565.500,25,4.42]],sx:854.5,big:[882,562.500,56.500,113],
 lines:'M938 591.500H1062M938 647.500H994M968 667.500H984.500V650.500H994M1001 649.500H1049M1024.500 649.500V628.500H1085M1028 667.500H1036.500V653.500H1050M1056 651.500H1074',
 bits:[[1062,589,8.500,4.500,1.500],[994.500,645.500,7,7],[962.500,664.500,6,6],[1085,626.500,8.500,4.500,1],[1049.500,647.500,7,7],[1022,664.500,5.500,6],[1074,649.500,8.500,4.500,1]],
 tags:[[992,586,3,3],[963,643.500,7,3],[1011,646,3,3],[1051.500,624,3,3]]});
block({id:'gr',c:['#b3eb89','#51b20f'],x:1385.5,y:436.5,w:308.5,h:363,px:1300.700,y0:473.6,dy:11.555,bh:12,
 rows:['Fxfl [N]2|41|Fxfl','Fxfr [N]2|42|Fxfr','Fxrl [N]2|43|Fxrl','Fxrr [N]2|44|Fxrr','Fyfl [N]2|45|Fyfl','Fyfr [N]1|46|Fyfr','Fyrl [N]2|47|Fyrl','Fyrr [N]2|48|Fyrr','Mzfl [N]|49|Mzfl','Mzfr [N]|50|Mzfr','Mzrl [N]|51|Mzrl','Mzrr [N]|52|Mzrr','delta_fl [rad]2|53|delta_fl','delta_fr [rad]2|54|delta_fr','delta_rl [rad]2|55|delta_rl','delta_rr [rad]2|56|delta_rr','Vx [m/s]1|57|Vx','Vz [m/s]2|58|Vz','Vy_dot [m/s*s]|59|Vy_dot','phi_dot [rad/s]1|60|phi_dot','|Jz|Jz','|lf|lf','|l|l','|mf|mf','|mr|mr','|wr|wr'],
 outs:[[500.5,'psi_dot_dot','9','psi_dot_dot'],[619.8,'psi_dot','8','psi_dot'],[739.4,'3','7','psi']],ox:1828,
 src:[[573.500,20,3.22],[642,6,3.32]],sx:1422,big:[1444.500,559.500,59,112],
 lines:'M1503 615.500H1542M1528 638.500H1535.500V619.500H1542M1549 617.500H1621M1556 615.500H1565.500V572.500H1606M1591.500 617.500V588.500H1605M1597 638.500H1609.500V621.500H1621M1628 620.500H1656M1572.500 617.500V676.500H1416.500V638.500H1444',
 bits:[[1542.500,614,6.500,6.500],[1511,636,17.500,5.500],[1606.500,570.500,7.500,4],[1605.500,586.500,7.500,4],[1621.500,616.500,6.500,6.500],[1582.500,636,15,5.500],[1656.500,619,6,2.500]],
 tags:[[1556,614,8,3],[1599,614,5,3]]});
out.push('<circle cx="733" cy="357" r="2.400" fill="#cfe8f8"/><path d="M1856 978h5v13h-5zM1862.500 978h5v13h-5zM1869 978h12v13h-12z" fill="#f2f2f2"/>');
document.getElementById('diagram').innerHTML=out.join('');
</script>
</body>
</html>
